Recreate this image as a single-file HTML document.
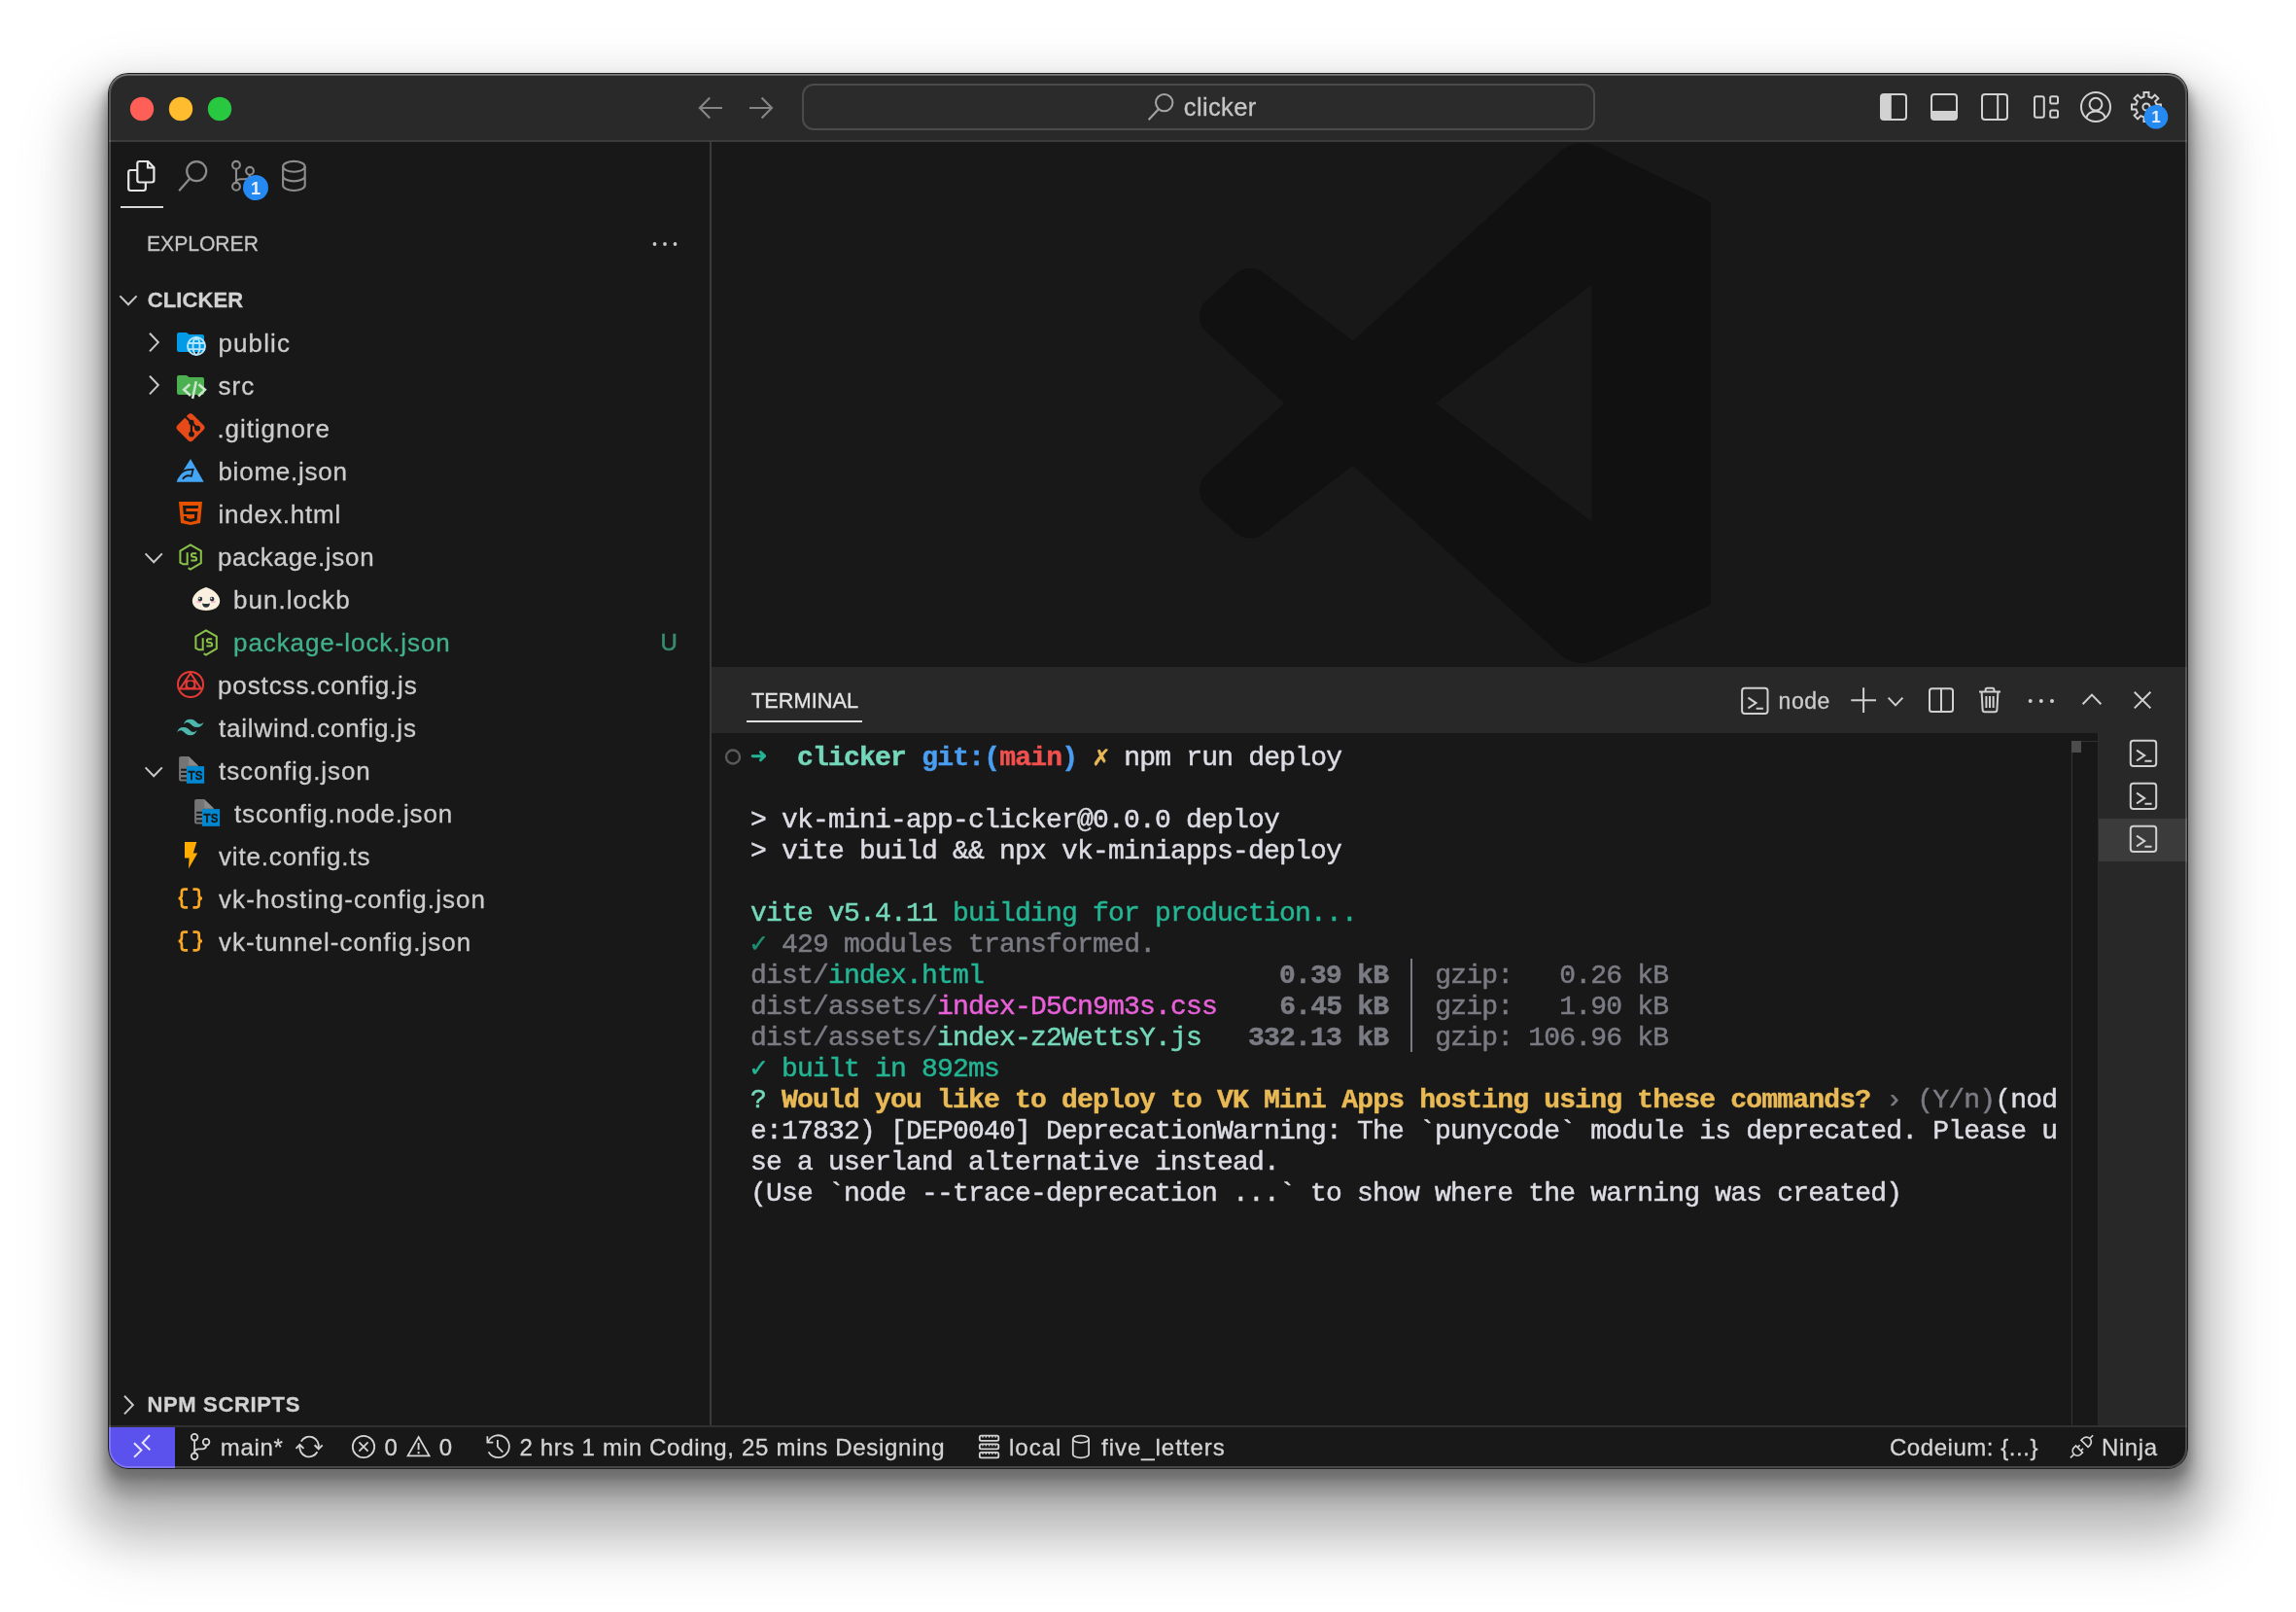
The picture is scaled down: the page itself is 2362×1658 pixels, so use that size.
<!DOCTYPE html>
<html lang="en">
<head>
<meta charset="utf-8">
<title>clicker — Visual Studio Code</title>
<style>
html,body{margin:0;padding:0;background:#ffffff;}
body{width:2362px;height:1658px;overflow:hidden;position:relative;font-family:"Liberation Sans", Arial, sans-serif;}
#shadow{position:absolute;left:111px;top:75px;width:2140px;height:1436px;border-radius:21px;
  box-shadow:0 8.2px 10px 2px rgba(0,0,0,.219), 0 20.4px 17px 7px rgba(0,0,0,.22), 0 42.3px 46.9px 24px rgba(0,0,0,.19), 0 48px 70px 32px rgba(0,0,0,.12);}
#win{position:absolute;left:112px;top:76px;width:2138px;height:1434px;border-radius:20px;overflow:hidden;background:#181818;}
#page{position:absolute;left:-112px;top:-76px;width:2362px;height:1658px;}
#page div{position:absolute;box-sizing:border-box;}
#labels{position:absolute;left:0;top:0;width:2362px;height:1658px;will-change:transform;}
.t{position:absolute;white-space:pre;line-height:1;-webkit-text-stroke:0.3px currentColor;font-family:"Liberation Sans", Arial, sans-serif;}
#icons{position:absolute;left:0;top:0;pointer-events:none;will-change:transform;}
#rim{position:absolute;left:112px;top:76px;width:2138px;height:1434px;border-radius:20px;box-sizing:border-box;
  box-shadow:0 0 0 1px rgba(0,0,0,.88), inset 0 0 0 2px rgba(255,255,255,.21), inset 0 1.5px 0 0 rgba(255,255,255,.22);pointer-events:none;}
#term{will-change:transform;position:absolute;left:772px;top:764px;-webkit-text-stroke:0.5px currentColor;margin:0;font-family:"Liberation Mono", "DejaVu Sans Mono", monospace;font-size:28px;line-height:32px;color:#dcdce4;white-space:pre;letter-spacing:-0.8px;}
#term b{font-weight:700;}
.g1{color:#23b594}.g2{color:#74d7b9}.bl{color:#4a9df0}.rd{color:#f0504e}.yl{color:#e8b954}.dm{color:#7b7b84}.mg{color:#e861d8}.dg{color:#1f8f73}

#term .vr{color:transparent;-webkit-text-stroke:0 transparent;}

</style>
</head>
<body>
<div id="shadow"></div>
<div id="win"><div id="page">
<div style="left:112px;top:75px;width:2138px;height:71px;background:#292929;border-bottom:2px solid #3c3c3c;"></div>
<div style="left:825px;top:86px;width:816px;height:48px;border:2px solid #4b4b4b;border-radius:12px;background:#2b2b2b;"></div>
<div style="left:730px;top:146px;width:2px;height:1321px;background:#3a3a3a;"></div>
<div style="left:124px;top:212px;width:44px;height:2px;background:#d8d8d8;"></div>
<div style="left:732px;top:686px;width:1518px;height:68px;background:#282828;"></div>
<div style="left:768px;top:741px;width:119px;height:2px;background:#e0e0e0;"></div>
<div style="left:2159px;top:754px;width:91px;height:713px;background:#282828;"></div>
<div style="left:2159px;top:842px;width:91px;height:44px;background:#3b3b3b;"></div>
<div style="left:2130.5px;top:762px;width:1.0px;height:705px;background:#333333;"></div>
<div style="left:2130.5px;top:762px;width:28.5px;height:1px;background:#303030;"></div>
<div style="left:2158px;top:754px;width:1px;height:713px;background:#2c2c2c;"></div>
<div style="left:2130.5px;top:762px;width:10.0px;height:12px;background:#4c4c4c;"></div>
<div style="left:1451.4px;top:986px;width:2.0px;height:96px;background:#7b7b84;"></div>
<div style="left:112px;top:1466px;width:2138px;height:45px;background:#181818;border-top:2px solid #303030;"></div>
<div style="left:112px;top:1468px;width:68px;height:43px;background:#5b51ec;"></div>
<pre id="term"><b class="g1">➜</b>  <b class="g2">clicker</b> <b class="bl">git:(</b><b class="rd">main</b><b class="bl">)</b> <b class="yl">✗</b> npm run deploy

&gt; vk-mini-app-clicker@0.0.0 deploy
&gt; vite build &amp;&amp; npx vk-miniapps-deploy

<span class="g2">vite v5.4.11 </span><span class="g1">building for production...</span>
<span class="dg">✓</span><span class="dm"> 429 modules transformed.</span>
<span class="dm">dist/</span><span class="g1">index.html</span>                   <b class="dm">0.39 kB</b><span class="dm"> <span class="vr">│</span> gzip:   0.26 kB</span>
<span class="dm">dist/assets/</span><span class="mg">index-D5Cn9m3s.css</span>    <b class="dm">6.45 kB</b><span class="dm"> <span class="vr">│</span> gzip:   1.90 kB</span>
<span class="dm">dist/assets/</span><span class="g2">index-z2WettsY.js</span>   <b class="dm">332.13 kB</b><span class="dm"> <span class="vr">│</span> gzip: 106.96 kB</span>
<span class="g1">✓ built in 892ms</span>
<span class="g2">?</span> <b class="yl">Would you like to deploy to VK Mini Apps hosting using these commands?</b><span class="dm"> › (Y/n)</span>(nod
e:17832) [DEP0040] DeprecationWarning: The `punycode` module is deprecated. Please u
se a userland alternative instead.
(Use `node --trace-deprecation ...` to show where the warning was created)</pre>

</div></div>
<div id="labels">
<span class="t" style="left:1217.8px;top:98px;font-size:25.5px;font-weight:400;color:#c6c6c6;letter-spacing:0.367px;">clicker</span>
<span class="t" style="left:150.9px;top:240px;font-size:22px;font-weight:400;color:#c4c4c4;letter-spacing:0.000px;transform:scaleX(0.9590);transform-origin:0 0;">EXPLORER</span>
<span class="t" style="left:151.8px;top:298px;font-size:22px;font-weight:700;color:#d2d2d2;letter-spacing:0.083px;">CLICKER</span>
<span class="t" style="left:224.4px;top:340px;font-size:26px;font-weight:400;color:#cccccc;letter-spacing:1.140px;">public</span>
<span class="t" style="left:224.4px;top:384px;font-size:26px;font-weight:400;color:#cccccc;letter-spacing:1.050px;">src</span>
<span class="t" style="left:223.4px;top:428px;font-size:26px;font-weight:400;color:#cccccc;letter-spacing:0.944px;">.gitignore</span>
<span class="t" style="left:224.4px;top:472px;font-size:26px;font-weight:400;color:#cccccc;letter-spacing:0.767px;">biome.json</span>
<span class="t" style="left:224.4px;top:516px;font-size:26px;font-weight:400;color:#cccccc;letter-spacing:0.833px;">index.html</span>
<span class="t" style="left:223.9px;top:560px;font-size:26px;font-weight:400;color:#cccccc;letter-spacing:0.682px;">package.json</span>
<span class="t" style="left:240.0px;top:604px;font-size:26px;font-weight:400;color:#cccccc;letter-spacing:1.037px;">bun.lockb</span>
<span class="t" style="left:240.0px;top:648px;font-size:26px;font-weight:400;color:#40b18a;letter-spacing:0.919px;">package-lock.json</span>
<span class="t" style="left:224.0px;top:692px;font-size:26px;font-weight:400;color:#cccccc;letter-spacing:0.875px;">postcss.config.js</span>
<span class="t" style="left:225.0px;top:736px;font-size:26px;font-weight:400;color:#cccccc;letter-spacing:0.800px;">tailwind.config.js</span>
<span class="t" style="left:225.0px;top:780px;font-size:26px;font-weight:400;color:#cccccc;letter-spacing:0.942px;">tsconfig.json</span>
<span class="t" style="left:241.0px;top:824px;font-size:26px;font-weight:400;color:#cccccc;letter-spacing:0.859px;">tsconfig.node.json</span>
<span class="t" style="left:225.0px;top:868px;font-size:26px;font-weight:400;color:#cccccc;letter-spacing:0.838px;">vite.config.ts</span>
<span class="t" style="left:225.0px;top:912px;font-size:26px;font-weight:400;color:#cccccc;letter-spacing:1.076px;">vk-hosting-config.json</span>
<span class="t" style="left:225.0px;top:956px;font-size:26px;font-weight:400;color:#cccccc;letter-spacing:1.040px;">vk-tunnel-config.json</span>
<span class="t" style="left:679.5px;top:649px;font-size:24px;font-weight:400;color:#398b6d;letter-spacing:0.900px;-webkit-text-stroke:0.6px currentColor;">U</span>
<span class="t" style="left:151.5px;top:1434px;font-size:22px;font-weight:700;color:#d2d2d2;letter-spacing:0.650px;">NPM SCRIPTS</span>
<span class="t" style="left:773.0px;top:710px;font-size:22.5px;font-weight:400;color:#e4e4e4;letter-spacing:0.000px;transform:scaleX(0.9673);transform-origin:0 0;">TERMINAL</span>
<span class="t" style="left:1829.6px;top:710px;font-size:23px;font-weight:400;color:#cccccc;letter-spacing:0.533px;">node</span>
<span class="t" style="left:226.8px;top:1477px;font-size:24px;font-weight:400;color:#d4d4d4;letter-spacing:0.675px;">main*</span>
<span class="t" style="left:395.4px;top:1477px;font-size:24px;font-weight:400;color:#d4d4d4;letter-spacing:0.600px;">0</span>
<span class="t" style="left:451.8px;top:1477px;font-size:24px;font-weight:400;color:#d4d4d4;letter-spacing:0.600px;">0</span>
<span class="t" style="left:534.4px;top:1477px;font-size:24px;font-weight:400;color:#d4d4d4;letter-spacing:0.694px;">2 hrs 1 min Coding, 25 mins Designing</span>
<span class="t" style="left:1038.0px;top:1477px;font-size:24px;font-weight:400;color:#d4d4d4;letter-spacing:1.000px;">local</span>
<span class="t" style="left:1133.0px;top:1477px;font-size:24px;font-weight:400;color:#d4d4d4;letter-spacing:0.973px;">five_letters</span>
<span class="t" style="left:1944.0px;top:1477px;font-size:24px;font-weight:400;color:#d4d4d4;letter-spacing:0.538px;">Codeium: {...}</span>
<span class="t" style="left:2162.0px;top:1477px;font-size:24px;font-weight:400;color:#d4d4d4;letter-spacing:0.600px;">Ninja</span>
</div>
<svg id="icons" width="2362" height="1658" viewBox="0 0 2362 1658">
<clipPath id="lpclip"><rect x="1200" y="146" width="560" height="540"/></clipPath>
<g clip-path="url(#lpclip)"><g transform="translate(1234.4 145.9) scale(2.1)"><path d="M246.94 27.64L194.19 2.24a15.96 15.96 0 00-18.2 3.1L75.02 97.47 31.04 64.09a10.64 10.64 0 00-13.6.6L3.35 77.52c-4.65 4.23-4.65 11.55-.01 15.79L41.48 128 3.34 162.69c-4.65 4.24-4.64 11.56.01 15.79l14.1 12.83a10.64 10.64 0 0013.6.6l43.98-33.38 100.97 92.12a15.94 15.94 0 0018.2 3.1l52.75-25.38A16 16 0 00256 213.95V42.05a16 16 0 00-9.06-14.41zM192.03 186.08L115.4 128l76.63-58.08v116.16z" fill="#111111" fill-rule="evenodd"/></g></g>
<circle cx="146" cy="112" r="12.2" fill="#ff5f57"/>
<circle cx="186" cy="112" r="12.2" fill="#febc2e"/>
<circle cx="226" cy="112" r="12.2" fill="#28c840"/>
<path d="M743 111 H720.6 M730.2 100.6 L719.9 111 L730.2 121.4" fill="none" stroke="#858585" stroke-width="2.2" stroke-linecap="butt" stroke-linejoin="miter" />
<path d="M771 111 H793.4 M783.6 100.6 L793.9 111 L783.6 121.4" fill="none" stroke="#858585" stroke-width="2.2" stroke-linecap="butt" stroke-linejoin="miter" />
<circle cx="1197.7" cy="105.6" r="8.7" fill="none" stroke="#a4a4a4" stroke-width="2"/>
<path d="M1191.9 112.2 L1181.6 123.3" fill="none" stroke="#a4a4a4" stroke-width="2" stroke-linecap="butt" stroke-linejoin="miter" />
<rect x="1935" y="97" width="26" height="26" rx="3" fill="none" stroke="#d2d2d2" stroke-width="2"/>
<path d="M1938 97 H1945.8 V123 H1938 Q1935 123 1935 120 V100 Q1935 97 1938 97Z" fill="#d2d2d2"/>
<rect x="1987" y="97" width="26" height="26" rx="3" fill="none" stroke="#d2d2d2" stroke-width="2"/>
<path d="M1987 113.9 H2013 V120 Q2013 123 2010 123 H1990 Q1987 123 1987 120Z" fill="#d2d2d2"/>
<rect x="2039" y="97" width="26" height="26" rx="3" fill="none" stroke="#d2d2d2" stroke-width="2"/>
<path d="M2055.2 97 V123" fill="none" stroke="#d2d2d2" stroke-width="2" stroke-linecap="butt" stroke-linejoin="miter" />
<rect x="2093" y="99.2" width="9.800000000000182" height="21.599999999999994" rx="2" fill="none" stroke="#d2d2d2" stroke-width="2"/>
<rect x="2109.2" y="99.2" width="7.800000000000182" height="7.200000000000003" rx="1.5" fill="none" stroke="#d2d2d2" stroke-width="2"/>
<rect x="2109.2" y="113.6" width="7.800000000000182" height="7.200000000000003" rx="1.5" fill="none" stroke="#d2d2d2" stroke-width="2"/>
<circle cx="2156" cy="110" r="15" fill="none" stroke="#d2d2d2" stroke-width="2"/>
<circle cx="2156" cy="107.2" r="6.4" fill="none" stroke="#d2d2d2" stroke-width="2"/>
<path d="M2146.2 121.5 Q2148 114.6 2156 114.6 Q2164 114.6 2165.8 121.5" fill="none" stroke="#d2d2d2" stroke-width="2" stroke-linecap="butt" stroke-linejoin="miter" />
<path d="M2205.56 99.48 L2205.50 95.01 L2210.50 95.01 L2210.44 99.48 L2213.72 100.84 L2216.84 97.63 L2220.37 101.16 L2217.16 104.28 L2218.52 107.56 L2222.99 107.50 L2222.99 112.50 L2218.52 112.44 L2217.16 115.72 L2220.37 118.84 L2216.84 122.37 L2213.72 119.16 L2210.44 120.52 L2210.50 124.99 L2205.50 124.99 L2205.56 120.52 L2202.28 119.16 L2199.16 122.37 L2195.63 118.84 L2198.84 115.72 L2197.48 112.44 L2193.01 112.50 L2193.01 107.50 L2197.48 107.56 L2198.84 104.28 L2195.63 101.16 L2199.16 97.63 L2202.28 100.84Z" fill="none" stroke="#d2d2d2" stroke-width="2" stroke-linecap="butt" stroke-linejoin="miter" stroke-linejoin="round"/>
<circle cx="2208" cy="110" r="3.6" fill="none" stroke="#d2d2d2" stroke-width="2"/>
<circle cx="2218" cy="120.2" r="12.3" fill="#2489f0"/>
<text x="2218" y="126.3" text-anchor="middle" font-family="Liberation Sans, Arial, sans-serif" font-weight="700" font-size="17" fill="#e8eefc">1</text>
<path d="M143.5 166 H152.3 L158.4 172.2 V185.3 Q158.4 187.5 156.2 187.5 H143.5 Q141.3 187.5 141.3 185.3 V168.2 Q141.3 166 143.5 166Z M152 166.3 V172.5 H158.2" fill="none" stroke="#e6e6e6" stroke-width="2.2" stroke-linecap="butt" stroke-linejoin="miter" stroke-linejoin="round"/>
<path d="M141 175 H134.4 Q132.2 175 132.2 177.2 V193.8 Q132.2 196 134.4 196 H147.6 Q149.8 196 149.8 193.8 V188" fill="none" stroke="#e6e6e6" stroke-width="2.2" stroke-linecap="butt" stroke-linejoin="miter" />
<circle cx="202.2" cy="176.1" r="10" fill="none" stroke="#8c8c8c" stroke-width="2.2"/>
<path d="M195.4 183.6 L184.2 196.3" fill="none" stroke="#8c8c8c" stroke-width="2.2" stroke-linecap="butt" stroke-linejoin="miter" />
<circle cx="243" cy="169.8" r="3.9" fill="none" stroke="#8c8c8c" stroke-width="2.1"/>
<circle cx="257" cy="175.8" r="3.9" fill="none" stroke="#8c8c8c" stroke-width="2.1"/>
<circle cx="243" cy="191.8" r="3.9" fill="none" stroke="#8c8c8c" stroke-width="2.1"/>
<path d="M243 173.7 V187.9 M257 179.7 Q257 184.3 252 184.3 H248 Q243.4 184.3 243 187.5" fill="none" stroke="#8c8c8c" stroke-width="2.1" stroke-linecap="butt" stroke-linejoin="miter" />
<circle cx="263" cy="193" r="13" fill="#2489f0"/>
<text x="263" y="199.5" text-anchor="middle" font-family="Liberation Sans, Arial, sans-serif" font-weight="700" font-size="18" fill="#e8eefc">1</text>
<ellipse cx="302.4" cy="171.3" rx="11.3" ry="5.4" fill="none" stroke="#8c8c8c" stroke-width="2.1"/>
<path d="M291.1 171.3 V190.6 A11.3 5.4 0 0 0 313.7 190.6 V171.3 M291.1 181 A11.3 5.4 0 0 0 313.7 181" fill="none" stroke="#8c8c8c" stroke-width="2.1" stroke-linecap="butt" stroke-linejoin="miter" />
<circle cx="673.5" cy="251" r="1.9" fill="#c8c8c8"/>
<circle cx="684" cy="251" r="1.9" fill="#c8c8c8"/>
<circle cx="694.5" cy="251" r="1.9" fill="#c8c8c8"/>
<path d="M123.4 304.40000000000003 L132 313.2 L140.6 304.40000000000003" fill="none" stroke="#c8c8c8" stroke-width="2" stroke-linecap="butt" stroke-linejoin="miter" />
<path d="M154.0 342.8 L162.8 352.1 L154.0 361.40000000000003" fill="none" stroke="#c8c8c8" stroke-width="2" stroke-linecap="butt" stroke-linejoin="miter" />
<path d="M154.0 386.8 L162.8 396.1 L154.0 405.40000000000003" fill="none" stroke="#c8c8c8" stroke-width="2" stroke-linecap="butt" stroke-linejoin="miter" />
<path d="M149.6 569.4 L158.2 578.1999999999999 L166.79999999999998 569.4" fill="none" stroke="#c8c8c8" stroke-width="2" stroke-linecap="butt" stroke-linejoin="miter" />
<path d="M149.6 789.4 L158.2 798.1999999999999 L166.79999999999998 789.4" fill="none" stroke="#c8c8c8" stroke-width="2" stroke-linecap="butt" stroke-linejoin="miter" />
<path d="M128.0 1435.8 L136.8 1445.1 L128.0 1454.3999999999999" fill="none" stroke="#c8c8c8" stroke-width="2" stroke-linecap="butt" stroke-linejoin="miter" />
<g transform="translate(180 336)"><path d="M13.844 7.536l-1.288-1.072A2 2 0 0011.276 6H4a2 2 0 00-2 2v16a2 2 0 002 2h24a2 2 0 002-2V10a2 2 0 00-2-2H15.124a2 2 0 01-1.28-.464z" fill="#039be5"/><circle cx="22" cy="20" r="9" fill="none" stroke="#b3e5fc" stroke-width="2"/><ellipse cx="22" cy="20" rx="3.5" ry="9" fill="none" stroke="#b3e5fc" stroke-width="1.9"/><path d="M13.6 17 H30.4 M13.6 23.1 H30.4 M22 11 V14" fill="none" stroke="#b3e5fc" stroke-width="1.9" stroke-linecap="butt" stroke-linejoin="miter" /></g>
<g transform="translate(180 380)"><path d="M13.844 7.536l-1.288-1.072A2 2 0 0011.276 6H4a2 2 0 00-2 2v16a2 2 0 002 2h24a2 2 0 002-2V10a2 2 0 00-2-2H15.124a2 2 0 01-1.28-.464z" fill="#4caf50"/><path d="M15.3 15.3 L9.2 20.75 L16 27 M21.8 12.2 L18.1 29.9 M24.4 15.3 L30.9 20.9 L24.1 27.5" fill="none" stroke="#c8e6c9" stroke-width="2.6" stroke-linecap="butt" stroke-linejoin="miter" /></g>
<rect x="-11.2" y="-11.2" width="22.4" height="22.4" rx="3.6" transform="translate(196 439.8) rotate(45)" fill="#e64a19"/>
<path d="M190.4 428.2 L196.9 434.5 V446.6 M197.4 435 L203.1 440.6" fill="none" stroke="#181818" stroke-width="2.2" stroke-linecap="butt" stroke-linejoin="miter" />
<circle cx="196.9" cy="434.5" r="2.7" fill="#181818"/>
<circle cx="197" cy="446.6" r="2.9" fill="#181818"/>
<circle cx="203.1" cy="440.6" r="2.9" fill="#181818"/>
<g transform="translate(180 469)"><path d="M16.05 3.1 L29.7 26.8 H1.6 Q4.5 19 7.5 16.6 Z" fill="#42a5f5"/><path d="M3 22.2 Q6 15.6 12 14.3 L18.7 13.6 L16.9 20.7 L13.4 20.2 Q9.4 21 8 23.8" fill="none" stroke="#181818" stroke-width="1.7" stroke-linecap="butt" stroke-linejoin="miter" stroke-linejoin="round"/></g>
<g transform="translate(180 512)"><path d="M4 4l2 22 10 2 10-2 2-22zm19.72 7H11.28l.29 3h11.86l-.802 9.335L15.99 25l-6.635-1.646L8.93 19h3.02l.19 2 3.86.77 3.84-.77.29-4H8.84L8 8h16z" fill="#e65100" fill-rule="evenodd"/></g>
<g transform="translate(180 557)"><path d="M12.7 11.2 V23.3 H8.6 L5.4 21.6 V9.6 L15.9 3.5 L26.8 9.6 V22.2 L15.9 28.5 L13.6 27.2" fill="none" stroke="#8bc34a" stroke-width="2" stroke-linecap="butt" stroke-linejoin="miter" stroke-linejoin="round"/><path d="M22.2 12.2 H18.4 Q16.9 12.2 16.9 13.9 Q16.9 15.6 18.5 15.8 L20.6 16.1 Q22.2 16.4 22.2 18 Q22.2 19.5 20.6 19.5 H16.4" fill="none" stroke="#8bc34a" stroke-width="2" stroke-linecap="butt" stroke-linejoin="miter" /></g>
<g transform="translate(196 645)"><path d="M12.7 11.2 V23.3 H8.6 L5.4 21.6 V9.6 L15.9 3.5 L26.8 9.6 V22.2 L15.9 28.5 L13.6 27.2" fill="none" stroke="#8bc34a" stroke-width="2" stroke-linecap="butt" stroke-linejoin="miter" stroke-linejoin="round"/><path d="M22.2 12.2 H18.4 Q16.9 12.2 16.9 13.9 Q16.9 15.6 18.5 15.8 L20.6 16.1 Q22.2 16.4 22.2 18 Q22.2 19.5 20.6 19.5 H16.4" fill="none" stroke="#8bc34a" stroke-width="2" stroke-linecap="butt" stroke-linejoin="miter" /></g>
<g transform="translate(196 601)"><path d="M16 2.9 C21 4.2 30.2 9.5 30.2 17 C30.2 23.5 24 27 16 27 C8 27 1.8 23.5 1.8 17 C1.8 9.5 11 4.2 16 2.9Z" fill="#fbf0df"/><ellipse cx="8.6" cy="17.9" rx="2.4" ry="1.3" fill="#f8bbd0"/><ellipse cx="23.4" cy="17.9" rx="2.4" ry="1.3" fill="#f8bbd0"/><circle cx="9.9" cy="15.1" r="2.3" fill="#263238"/><circle cx="22.1" cy="15.1" r="2.3" fill="#263238"/><circle cx="9.2" cy="14.4" r="0.9" fill="#eceff1"/><circle cx="21.4" cy="14.4" r="0.9" fill="#eceff1"/><path d="M12 19.4 Q16 20.4 20 19.4 Q19.4 23.8 16 23.8 Q12.6 23.8 12 19.4Z" fill="#263238"/></g>
<g transform="translate(180 689)"><circle cx="16" cy="15" r="13" fill="none" stroke="#e53935" stroke-width="2"/><path d="M16 3.4 L5.2 19.4 H26.8 Z M3.8 19.6 H28.2" fill="none" stroke="#e53935" stroke-width="2" stroke-linecap="butt" stroke-linejoin="miter" stroke-linejoin="round"/><path d="M10.6 10.6 H21.4 V19.2 H10.6Z M16 11.7 A3.3 3.3 0 1 0 16 18.3 A3.3 3.3 0 1 0 16 11.7Z" fill="#e53935" fill-rule="evenodd"/></g>
<g transform="translate(195.8 748) scale(1.37) translate(-12 -12)"><path d="M12 6c-2.67 0-4.33 1.33-5 4 1-1.33 2.17-1.83 3.5-1.5.76.19 1.31.74 1.91 1.35.98 1 2.09 2.15 4.59 2.15 2.67 0 4.33-1.33 5-4-1 1.33-2.17 1.83-3.5 1.5-.76-.19-1.3-.74-1.91-1.35C15.61 7.15 14.5 6 12 6m-5 6c-2.67 0-4.33 1.33-5 4 1-1.33 2.17-1.83 3.5-1.5.76.19 1.3.74 1.91 1.35C8.39 16.85 9.5 18 12 18c2.67 0 4.33-1.33 5-4-1 1.33-2.17 1.83-3.5 1.5-.76-.19-1.3-.74-1.91-1.35C10.61 13.15 9.5 12 7 12z" fill="#4db6ac"/></g>
<g transform="translate(180 777)"><path d="M6 1 H14.2 L23.9 10.3 V24.4 Q23.9 26.4 21.9 26.4 H6 Q4.1 26.4 4.1 24.4 V3 Q4.1 1 6 1Z" fill="#757575"/><path d="M14.2 1.4 L23.5 10.3 H15.6 Q14.2 10.3 14.2 8.9Z" fill="#8a8a8a"/><path d="M6.1 14.7 H13 M6.1 19.1 H13 M6.1 23.6 H13" fill="none" stroke="#181818" stroke-width="2" stroke-linecap="butt" stroke-linejoin="miter" /><rect x="11.9" y="11.1" width="18.2" height="17.7" fill="#0288d1"/><text x="21" y="24.9" text-anchor="middle" font-family="Liberation Sans, Arial, sans-serif" font-weight="700" font-size="13" fill="#181818" stroke="#181818" stroke-width="0.35" letter-spacing="0.3" transform="translate(21 0) scale(0.88 1) translate(-21 0)">TS</text></g>
<g transform="translate(196 821)"><path d="M6 1 H14.2 L23.9 10.3 V24.4 Q23.9 26.4 21.9 26.4 H6 Q4.1 26.4 4.1 24.4 V3 Q4.1 1 6 1Z" fill="#757575"/><path d="M14.2 1.4 L23.5 10.3 H15.6 Q14.2 10.3 14.2 8.9Z" fill="#8a8a8a"/><path d="M6.1 14.7 H13 M6.1 19.1 H13 M6.1 23.6 H13" fill="none" stroke="#181818" stroke-width="2" stroke-linecap="butt" stroke-linejoin="miter" /><rect x="11.9" y="11.1" width="18.2" height="17.7" fill="#0288d1"/><text x="21" y="24.9" text-anchor="middle" font-family="Liberation Sans, Arial, sans-serif" font-weight="700" font-size="13" fill="#181818" stroke="#181818" stroke-width="0.35" letter-spacing="0.3" transform="translate(21 0) scale(0.88 1) translate(-21 0)">TS</text></g>
<path d="M190 866 H202.3 L198.8 877.6 H203.2 L194 893.4 L194.6 882.6 H190Z" fill="#ffab00"/>
<path d="M193.1 914.7 H189.6 Q186.9 914.7 186.9 917.4000000000001 V920.8 Q186.9 924 183.6 924 Q186.9 924 186.9 927.2 V930.5999999999999 Q186.9 933.3 189.6 933.3 H193.1" fill="none" stroke="#f9a825" stroke-width="2.7" stroke-linecap="butt" stroke-linejoin="miter" />
<path d="M198.5 914.7 H202 Q204.7 914.7 204.7 917.4000000000001 V920.8 Q204.7 924 208 924 Q204.7 924 204.7 927.2 V930.5999999999999 Q204.7 933.3 202 933.3 H198.5" fill="none" stroke="#f9a825" stroke-width="2.7" stroke-linecap="butt" stroke-linejoin="miter" />
<path d="M193.1 958.7 H189.6 Q186.9 958.7 186.9 961.4000000000001 V964.8 Q186.9 968 183.6 968 Q186.9 968 186.9 971.2 V974.5999999999999 Q186.9 977.3 189.6 977.3 H193.1" fill="none" stroke="#f9a825" stroke-width="2.7" stroke-linecap="butt" stroke-linejoin="miter" />
<path d="M198.5 958.7 H202 Q204.7 958.7 204.7 961.4000000000001 V964.8 Q204.7 968 208 968 Q204.7 968 204.7 971.2 V974.5999999999999 Q204.7 977.3 202 977.3 H198.5" fill="none" stroke="#f9a825" stroke-width="2.7" stroke-linecap="butt" stroke-linejoin="miter" />
<rect x="1792.1" y="707.6999999999999" width="26.40000000000009" height="26.200000000000045" rx="3" fill="none" stroke="#d0d0d0" stroke-width="2"/>
<path d="M1798.3999999999999 717.5999999999999 L1806.5 723.0999999999999 L1798.3999999999999 728.4 M1806.7 728.6999999999999 H1813.8999999999999" fill="none" stroke="#d0d0d0" stroke-width="2" stroke-linecap="butt" stroke-linejoin="miter" />
<rect x="2191.8" y="761.6999999999999" width="26.399999999999636" height="26.200000000000045" rx="3" fill="none" stroke="#d0d0d0" stroke-width="2"/>
<path d="M2198.1 771.5999999999999 L2206.2 777.0999999999999 L2198.1 782.4 M2206.4 782.6999999999999 H2213.6" fill="none" stroke="#d0d0d0" stroke-width="2" stroke-linecap="butt" stroke-linejoin="miter" />
<rect x="2191.8" y="805.6999999999999" width="26.399999999999636" height="26.200000000000045" rx="3" fill="none" stroke="#d0d0d0" stroke-width="2"/>
<path d="M2198.1 815.5999999999999 L2206.2 821.0999999999999 L2198.1 826.4 M2206.4 826.6999999999999 H2213.6" fill="none" stroke="#d0d0d0" stroke-width="2" stroke-linecap="butt" stroke-linejoin="miter" />
<rect x="2191.8" y="849.6999999999999" width="26.399999999999636" height="26.200000000000045" rx="3" fill="none" stroke="#d0d0d0" stroke-width="2"/>
<path d="M2198.1 859.5999999999999 L2206.2 865.0999999999999 L2198.1 870.4 M2206.4 870.6999999999999 H2213.6" fill="none" stroke="#d0d0d0" stroke-width="2" stroke-linecap="butt" stroke-linejoin="miter" />
<path d="M1904.3 720.2 H1930 M1917.1 707.3 V733" fill="none" stroke="#d0d0d0" stroke-width="2" stroke-linecap="butt" stroke-linejoin="miter" />
<path d="M1942.6 717.6 L1950 725.4 L1957.4 717.6" fill="none" stroke="#d0d0d0" stroke-width="2" stroke-linecap="butt" stroke-linejoin="miter" />
<rect x="1985" y="708.3" width="24" height="23.600000000000023" rx="2.5" fill="none" stroke="#d0d0d0" stroke-width="2"/>
<path d="M1997 708.3 V731.9" fill="none" stroke="#d0d0d0" stroke-width="2" stroke-linecap="butt" stroke-linejoin="miter" />
<path d="M2036 711.6 H2058 M2042.6 711.6 V709.6 Q2042.6 707.8 2044.4 707.8 H2049.6 Q2051.4 707.8 2051.4 709.6 V711.6 M2038.6 711.6 L2039.6 730 Q2039.7 732.3 2042 732.3 H2052 Q2054.3 732.3 2054.4 730 L2055.4 711.6 M2043.4 716 V728 M2047 716 V728 M2050.6 716 V728" fill="none" stroke="#d0d0d0" stroke-width="2" stroke-linecap="butt" stroke-linejoin="miter" />
<circle cx="2088.7" cy="721.1" r="2" fill="#d0d0d0"/>
<circle cx="2099.8" cy="721.1" r="2" fill="#d0d0d0"/>
<circle cx="2111" cy="721.1" r="2" fill="#d0d0d0"/>
<path d="M2142.6 724.2 L2152 714.6 L2161.4 724.2" fill="none" stroke="#d0d0d0" stroke-width="2" stroke-linecap="butt" stroke-linejoin="miter" />
<path d="M2195.8 711.8 L2212.4 728.4 M2212.4 711.8 L2195.8 728.4" fill="none" stroke="#d0d0d0" stroke-width="2" stroke-linecap="butt" stroke-linejoin="miter" />
<circle cx="754" cy="778.5" r="7" fill="none" stroke="#5a5a5a" stroke-width="2.4"/>
<path d="M154 1476.3 L146.7 1484 L154.3 1491.3 M138 1484.3 L145.4 1491.6 L138 1498.8" fill="none" stroke="#e8e6ff" stroke-width="2" stroke-linecap="butt" stroke-linejoin="miter" />
<circle cx="200.1" cy="1478.2" r="3.3" fill="none" stroke="#d4d4d4" stroke-width="1.8"/>
<circle cx="212.1" cy="1483.2" r="3.3" fill="none" stroke="#d4d4d4" stroke-width="1.8"/>
<circle cx="200.1" cy="1497.8" r="3.3" fill="none" stroke="#d4d4d4" stroke-width="1.8"/>
<path d="M200.1 1481.5 V1494.5 M212.1 1486.5 Q212.1 1490.3 208 1490.3 H204.4 Q200.4 1490.3 200.1 1494" fill="none" stroke="#d4d4d4" stroke-width="1.8" stroke-linecap="butt" stroke-linejoin="miter" />
<path d="M309.8 1482.6 A9.6 9.6 0 0 1 327.6 1489.2 M326.4 1493.2 A9.6 9.6 0 0 1 308.5 1486.8" fill="none" stroke="#d4d4d4" stroke-width="1.9" stroke-linecap="butt" stroke-linejoin="miter" />
<path d="M323.6 1486.3 L327.7 1490.3 L331.7 1486.3 M304.5 1489.9 L308.4 1485.9 L312.5 1489.9" fill="none" stroke="#d4d4d4" stroke-width="1.9" stroke-linecap="butt" stroke-linejoin="miter" />
<circle cx="374" cy="1488" r="11.2" fill="none" stroke="#d4d4d4" stroke-width="1.8"/>
<path d="M369.4 1483.4 L378.6 1492.6 M378.6 1483.4 L369.4 1492.6" fill="none" stroke="#d4d4d4" stroke-width="1.8" stroke-linecap="butt" stroke-linejoin="miter" />
<path d="M430.6 1478 L441.6 1497.4 H419.6 Z" fill="none" stroke="#d4d4d4" stroke-width="1.8" stroke-linecap="butt" stroke-linejoin="miter" stroke-linejoin="round"/>
<path d="M430.6 1484 V1491.2 M430.6 1493 V1495.2" fill="none" stroke="#d4d4d4" stroke-width="1.9" stroke-linecap="butt" stroke-linejoin="miter" />
<path d="M501.9 1483.4 A11.4 11.4 0 1 1 502.6 1493.4" fill="none" stroke="#d4d4d4" stroke-width="1.8" stroke-linecap="butt" stroke-linejoin="miter" />
<path d="M501.4 1477.3 V1483.6 H507.3" fill="none" stroke="#d4d4d4" stroke-width="1.8" stroke-linecap="butt" stroke-linejoin="miter" />
<path d="M511.9 1481.1 V1488 L517.3 1493.6" fill="none" stroke="#d4d4d4" stroke-width="1.8" stroke-linecap="butt" stroke-linejoin="miter" />
<rect x="1007.8" y="1476.6" width="19.5" height="5.2000000000000455" rx="1.6" fill="none" stroke="#d4d4d4" stroke-width="1.8"/>
<path d="M1011 1476.6 v2.2 M1014.3 1476.6 v2.2 M1017.6 1476.6 v2.2 M1020.9 1476.6 v2.2 M1024.2 1476.6 v2.2" fill="none" stroke="#d4d4d4" stroke-width="1.2" stroke-linecap="butt" stroke-linejoin="miter" />
<rect x="1007.8" y="1485.3" width="19.5" height="5.100000000000136" rx="1.6" fill="none" stroke="#d4d4d4" stroke-width="1.8"/>
<path d="M1011 1485.3 v2.2 M1014.3 1485.3 v2.2 M1017.6 1485.3 v2.2 M1020.9 1485.3 v2.2 M1024.2 1485.3 v2.2" fill="none" stroke="#d4d4d4" stroke-width="1.2" stroke-linecap="butt" stroke-linejoin="miter" />
<rect x="1007.8" y="1493.9" width="19.5" height="5.399999999999864" rx="1.6" fill="none" stroke="#d4d4d4" stroke-width="1.8"/>
<path d="M1011 1493.9 v2.2 M1014.3 1493.9 v2.2 M1017.6 1493.9 v2.2 M1020.9 1493.9 v2.2 M1024.2 1493.9 v2.2" fill="none" stroke="#d4d4d4" stroke-width="1.2" stroke-linecap="butt" stroke-linejoin="miter" />
<ellipse cx="1111.95" cy="1480.2" rx="8.15" ry="3.6" fill="none" stroke="#d4d4d4" stroke-width="1.8"/>
<path d="M1103.8 1480.2 V1495.7 A8.15 3.6 0 0 0 1120.1 1495.7 V1480.2" fill="none" stroke="#d4d4d4" stroke-width="1.8" stroke-linecap="butt" stroke-linejoin="miter" />
<g transform="translate(2141.7 1487.7) rotate(-45)"><path d="M-16.6 0 H-11.4 M11.6 0 H16.2" fill="none" stroke="#d4d4d4" stroke-width="1.7" stroke-linecap="butt" stroke-linejoin="miter" /><path d="M-3.9 -4.9 H-6.5 A4.9 4.9 0 0 0 -6.5 4.9 H-3.9 Z" fill="none" stroke="#d4d4d4" stroke-width="1.7" stroke-linecap="butt" stroke-linejoin="miter" stroke-linejoin="round"/><path d="M4 -5 H6.6 A5 5 0 0 1 6.6 5 H4 Z" fill="none" stroke="#d4d4d4" stroke-width="1.7" stroke-linecap="butt" stroke-linejoin="miter" stroke-linejoin="round"/><path d="M-3.9 -2.4 H-0.5 M-3.9 2.4 H-0.5" fill="none" stroke="#d4d4d4" stroke-width="1.6" stroke-linecap="butt" stroke-linejoin="miter" /></g>
</svg>
<div id="rim"></div>
</body>
</html>
